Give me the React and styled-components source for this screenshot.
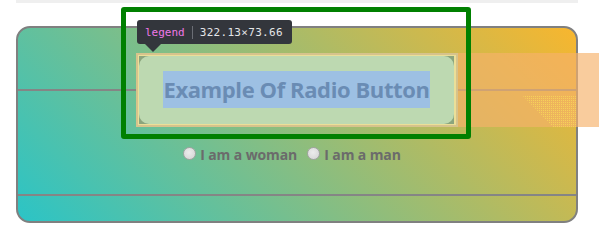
import React from 'react';
import styled, { createGlobalStyle } from 'styled-components';

const GlobalStyle = createGlobalStyle`
  html, body {
    margin: 0;
    padding: 0;
    background: #fff;
  }
  body {
    font-family: 'Open Sans', 'Noto Sans', sans-serif;
  }
`;

const Page = styled.div`
  position: relative;
  width: 599px;
  height: 245px;
  padding: 0 21px 0 16px;
  box-sizing: border-box;
  overflow: hidden;
`;

const TopStrip = styled.div`
  height: 3px;
  background: #efefef;
`;

// the radio group box
const Fieldset = styled.div`
  position: relative;
  margin-top: 23px;
  height: 197px;
  padding-top: 25px;
  box-sizing: border-box;
  border: 2px solid #808080;
  border-radius: 14px;
  background: linear-gradient(45deg, #2bc4c6, #f8b62e);
  display: flex;
  flex-direction: column;
  align-items: center;

  &::before,
  &::after {
    content: '';
    position: absolute;
    left: 0;
    right: 0;
    height: 2px;
    background: #858585;
  }
  &::before {
    top: 61px;
  }
  &::after {
    bottom: 25px;
  }
`;

const Legend = styled.div`
  position: relative;
  z-index: 1;
  width: 322px;
  height: 74px;
  box-sizing: border-box;
  border: 2px solid #d6c38c;
  background: #ebdf98;
  padding: 1px 2px 1px 1px;
`;

const LegendFace = styled.div`
  height: 100%;
  background: #8ba57d;
`;

const LegendPad = styled.div`
  height: 100%;
  box-sizing: border-box;
  padding: 15px 24px;
  border-radius: 10px;
  background: #bdd9b1;
`;

const LegendText = styled.div`
  height: 37px;
  background: #9dc0e3;
  color: #6a8cb4;
  font-weight: 700;
  font-size: 22px;
  letter-spacing: -0.4px;
  line-height: 37px;
  text-align: center;
  white-space: nowrap;
`;

// devtools margin highlight to the right of the legend
const MarginShade = styled.div`
  position: absolute;
  top: -2px;
  bottom: -2px;
  left: calc(100% + 2px);
  width: 141px;
  background: rgba(246, 178, 107, 0.66);
`;

const Hatch = styled.svg`
  position: absolute;
  left: 65px;
  top: 43px;
`;

const RadioRow = styled.div`
  position: relative;
  z-index: 1;
  margin-top: 18px;
  display: flex;
  align-items: center;
`;

const Option = styled.label`
  display: flex;
  align-items: center;
  gap: 4px;
  margin-right: 10px;
  font-size: 14px;
  font-weight: 700;
  letter-spacing: -0.1px;
  color: #6b6b6b;
  line-height: 20px;
`;

const Dot = styled.span`
  width: 11px;
  height: 11px;
  border-radius: 50%;
  border: 1px solid #a3a3a3;
  background: radial-gradient(circle at 45% 40%, #ececec, #d2d2d2);
  margin-top: -3px;
`;

const Highlight = styled.div`
  position: absolute;
  left: 121px;
  top: 7px;
  width: 350px;
  height: 132px;
  box-sizing: border-box;
  border: 5px solid #008000;
  border-radius: 3px;
  z-index: 2;
`;

const Tip = styled.div`
  position: absolute;
  left: 137px;
  top: 20px;
  height: 24px;
  padding: 0 9px 0 8px;
  box-sizing: border-box;
  display: flex;
  align-items: center;
  gap: 7px;
  background: #33363c;
  border-radius: 3px;
  font-family: 'DejaVu Sans Mono', monospace;
  font-size: 11px;
  z-index: 3;

  &::after {
    content: '';
    position: absolute;
    left: 8px;
    top: 100%;
    border: 8px solid transparent;
    border-bottom: 0;
    border-top-color: #33363c;
  }
`;

const TipTag = styled.span`
  color: #ee78e6;
`;

const TipDivider = styled.span`
  width: 1px;
  height: 13px;
  background: #6b6e75;
`;

const TipSize = styled.span`
  color: #e3e5e8;
  letter-spacing: 0.3px;
`;

export default function App() {
  return (
    <>
      <GlobalStyle />
      <Page>
        <TopStrip />
        <Fieldset>
          <Legend>
            <LegendFace>
              <LegendPad>
                <LegendText>Example Of Radio Button</LegendText>
              </LegendPad>
            </LegendFace>
            <MarginShade>
              <Hatch width="54" height="31" viewBox="0 0 54 31">
                <defs>
                  <pattern id="dots" width="2" height="2" patternUnits="userSpaceOnUse">
                    <rect width="1" height="1" fill="#f7d15a" />
                  </pattern>
                </defs>
                <polygon points="0,0 54,0 54,31 30,31" fill="url(#dots)" />
              </Hatch>
            </MarginShade>
          </Legend>
          <RadioRow>
            <Option>
              <Dot />I am a woman
            </Option>
            <Option>
              <Dot />I am a man
            </Option>
          </RadioRow>
        </Fieldset>
        <Highlight />
        <Tip>
          <TipTag>legend</TipTag>
          <TipDivider />
          <TipSize>322.13×73.66</TipSize>
        </Tip>
      </Page>
    </>
  );
}
